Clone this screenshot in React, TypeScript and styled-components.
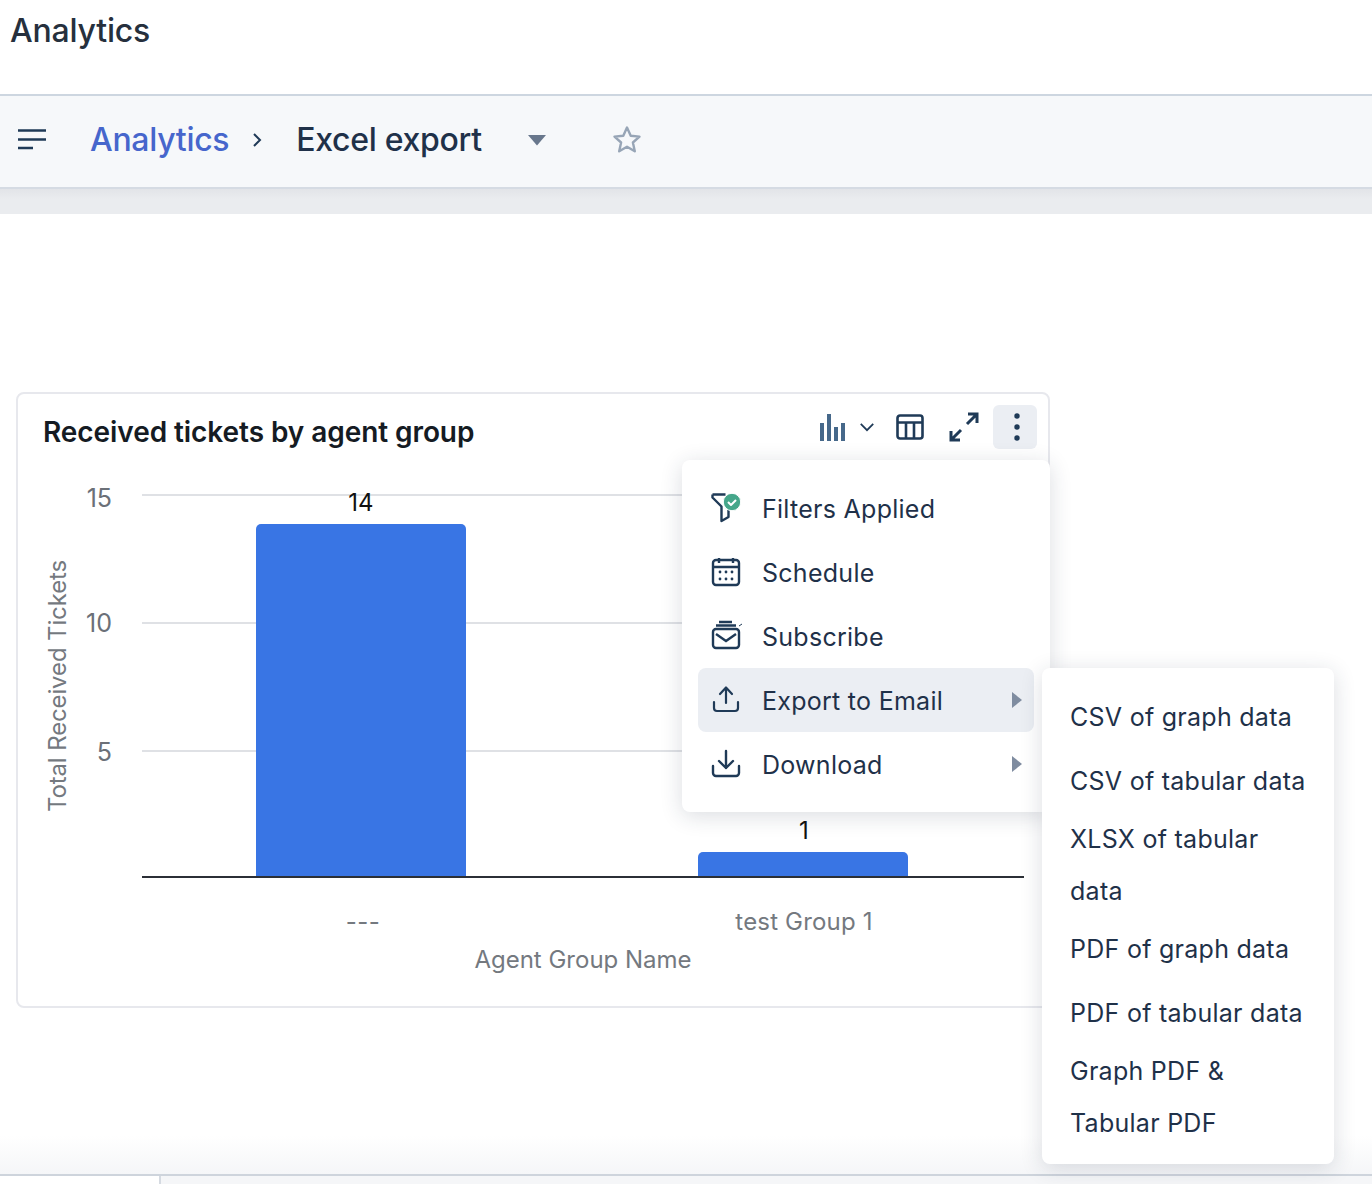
import React from "react";
import styled, { createGlobalStyle } from "styled-components";

const Global = createGlobalStyle`
  html, body { margin: 0; padding: 0; background: #fff; }
  body { font-family: Inter, "Noto Sans", "Liberation Sans", sans-serif; color: #1f3149; }
  * { box-sizing: border-box; }
`;

const Page = styled.div`
  width: 1372px; height: 1184px; overflow: hidden; display: flex; flex-direction: column; background: #fff;
`;
const TitleBar = styled.header`
  height: 94px; padding: 12px 0 0 10px; flex: none;
`;
const PageTitle = styled.h1`
  margin: 0; font-size: 32px; line-height: 38px; font-weight: 500; color: #26303d; letter-spacing: -0.2px;
`;
const Toolbar = styled.nav`
  height: 95px; flex: none; display: flex; align-items: center; background: #f6f8fa;
  border-top: 2px solid #cdd6e0; border-bottom: 2px solid #d5dbe3; padding: 0 0 3px 18px; color: #1f3149;
`;
const Crumb = styled.a`
  margin-left: 44px; font-size: 32px; font-weight: 500; color: #4666cc; letter-spacing: -0.3px; line-height: 40px;
`;
const Current = styled.span`
  margin-left: 34px; font-size: 32px; font-weight: 500; color: #1f3149; letter-spacing: -0.3px; line-height: 40px;
`;
const CrumbSep = styled.svg`margin-left: 23px;`;
const Caret = styled.svg`margin-left: 45px;`;
const Star = styled.svg`margin-left: 65px;`;
const Band = styled.div`
  height: 25px; flex: none; background: linear-gradient(#e2e4e8, #eaecef 40%);
`;
const Content = styled.main`
  flex: 1; padding: 178px 0 0 16px; background: linear-gradient(#fff 0, #fff 96%, #f5f6f8 100%);
`;
const Card = styled.section`
  position: relative; width: 1034px; height: 616px; border: 2px solid #e7e8ed; border-radius: 8px; background: #fff;
`;
const CardHead = styled.div`
  height: 76px; display: flex; align-items: flex-start; padding: 11px 11px 0 25px;
`;
const CardTitle = styled.h2`
  margin: 0; flex: 1; padding-top: 9px; font-size: 28px; line-height: 36px; font-weight: 600; color: #151b23; letter-spacing: -0.07px;
`;
const Actions = styled.div`
  display: flex; align-items: center; height: 44px;
`;
const ChartIcon = styled.svg`display: block; margin-right: 12px;`;
const Chevron = styled.svg`display: block; margin-right: 21px;`;
const TableIcon = styled.svg`display: block; margin-right: 25px;`;
const ExpandIcon = styled.svg`display: block; margin-right: 14px;`;
const MoreButton = styled.button`
  width: 44px; height: 44px; border: 0; padding: 0 0 0 4px; border-radius: 6px; background: #ebeef3;
  display: flex; align-items: center; justify-content: center;
`;
const ChartSvg = styled.svg`
  display: block; position: absolute; left: -1px; top: 75px;
`;
const Menu = styled.ul`
  position: absolute; left: 664px; top: 66px; width: 368px; height: 352px; margin: 0; padding: 16px;
  list-style: none; background: #fff; border-radius: 8px;
  box-shadow: 0 4px 22px rgba(30, 45, 70, 0.16);
`;
const Item = styled.li<{ $active?: boolean }>`
  height: 64px; display: flex; align-items: center; padding: 0 12px 0 12px; border-radius: 8px;
  background: ${(p) => (p.$active ? "#ebeef3" : "transparent")};
  font-size: 25px; letter-spacing: 0.27px; color: #1f3149;
`;
const ItemIcon = styled.svg`flex: none; margin-right: 20px; display: block;`;
const ItemText = styled.span`flex: 1; padding-top: 2px;`;
const Arrow = styled.svg`flex: none; display: block;`;
const SubMenu = styled.ul`
  position: absolute; left: 1024px; top: 274px; width: 292px; height: 496px; margin: 0; padding: 23px 26px 0 28px;
  list-style: none; background: #fff; border-radius: 8px;
  box-shadow: 0 4px 22px rgba(30, 45, 70, 0.16);
`;
const SubItem = styled.li<{ $gap: number }>`
  font-size: 25px; line-height: 52px; letter-spacing: 0.27px; color: #1f3149; margin-bottom: ${(p) => p.$gap}px;
`;
const Footer = styled.footer`
  height: 10px; flex: none; display: flex; border-top: 2px solid #ced4dc; background: #f5f6f8;
`;
const FooterLeft = styled.div`
  width: 161px; background: #fff; border-right: 2px solid #d5dae1;
`;

const navy = "#1f3a57";

export default function App() {
  return (
    <Page>
      <Global />
      <TitleBar><PageTitle>Analytics</PageTitle></TitleBar>
      <Toolbar>
        <svg width="28" height="22" viewBox="0 0 28 22" fill="none" stroke={navy} strokeWidth="2.4">
          <path d="M0 1.5h28M0 10.5h28M0 19h15" />
        </svg>
        <Crumb>Analytics</Crumb>
        <CrumbSep width="10" height="16" viewBox="0 0 10 16" fill="none" stroke={navy} strokeWidth="2">
          <path d="M2 2l6 6-6 6" />
        </CrumbSep>
        <Current>Excel export</Current>
        <Caret width="20" height="11" viewBox="0 0 20 11"><path d="M1 0h18l-9 10.5z" fill="#68778c" /></Caret>
        <Star width="30" height="30" viewBox="0 0 30 30" fill="none" stroke="#97a5b6" strokeWidth="2.4" strokeLinejoin="round">
          <path d="M15 2.5l3.7 8.2 8.8.9-6.6 5.9 1.9 8.8-7.8-4.6-7.8 4.6 1.9-8.8-6.6-5.9 8.8-.9z" />
        </Star>
      </Toolbar>
      <Band />
      <Content>
        <Card>
          <CardHead>
            <CardTitle>Received tickets by agent group</CardTitle>
            <Actions>
              <ChartIcon width="28" height="28" viewBox="0 0 28 28" fill="#46688a">
                <rect x="1" y="10" width="4" height="18" /><rect x="8" y="1" width="4" height="27" /><rect x="15" y="14" width="4" height="14" /><rect x="22" y="10" width="4" height="18" />
              </ChartIcon>
              <Chevron width="16" height="11" viewBox="0 0 18 12" fill="none" stroke={navy} strokeWidth="2">
                <path d="M2 2l7 7 7-7" />
              </Chevron>
              <TableIcon width="28" height="26" viewBox="0 0 28 26" fill="none" stroke={navy} strokeWidth="2.6">
                <rect x="1.5" y="1.5" width="25" height="23" rx="2.5" /><path d="M1.5 8.5h25M10 8.5v16M18 8.5v16" />
              </TableIcon>
              <ExpandIcon width="30" height="30" viewBox="0 0 30 30" fill="none" stroke={navy} strokeWidth="3">
                <path d="M18 12L28 2M19 2h9v9M12 18L2 28M2 19v9h9" />
              </ExpandIcon>
              <MoreButton aria-label="More">
                <svg width="6" height="28" viewBox="0 0 6 28" fill={navy}>
                  <circle cx="3" cy="3" r="2.7" /><circle cx="3" cy="14" r="2.7" /><circle cx="3" cy="25" r="2.7" />
                </svg>
              </MoreButton>
            </Actions>
          </CardHead>
          <ChartSvg width="1033" height="530" viewBox="0 0 1033 530" fontFamily="Inter, sans-serif">
            <g stroke="#dfe1e5" strokeWidth="2">
              <path d="M125 26h882M125 154h882M125 282h882" />
            </g>
            <path d="M239 60a5 5 0 0 1 5-5h200a5 5 0 0 1 5 5v349H239z" fill="#3975e4" />
            <path d="M681 388a5 5 0 0 1 5-5h200a5 5 0 0 1 5 5v21H681z" fill="#3975e4" />
            <path d="M125 408h882" stroke="#2b2f36" strokeWidth="2" />
            <g fill="#6b7078" fontSize="25" textAnchor="end">
              <text x="95" y="38">15</text>
              <text x="95" y="163">10</text>
              <text x="95" y="292">5</text>
            </g>
            <g fill="#111" fontSize="24" textAnchor="middle">
              <text x="344" y="42">14</text>
              <text x="787" y="370">1</text>
            </g>
            <g fill="#74797f" fontSize="24" textAnchor="middle">
              <text x="346" y="461" letterSpacing="0.5">---</text>
              <text x="787" y="461" letterSpacing="0.17">test Group 1</text>
              <text x="566" y="499" letterSpacing="0">Agent Group Name</text>
            </g>
            <text transform="translate(49 217) rotate(-90)" fill="#74797f" fontSize="24" textAnchor="middle" letterSpacing="-0.13">Total Received Tickets</text>
          </ChartSvg>
          <Menu>
            <Item>
              <ItemIcon width="32" height="32" viewBox="0 0 32 32" fill="none" stroke={navy} strokeWidth="2.4" strokeLinejoin="round">
                <path d="M2.5 2.5h13M2.5 2.5v3l9 9v14.5l7-4v-7" />
                <circle cx="22" cy="10" r="8.7" fill="#45a68a" stroke="#fff" strokeWidth="1" />
                <path d="M18 10l3 3 5-5" stroke="#fff" strokeWidth="2" />
              </ItemIcon>
              <ItemText>Filters Applied</ItemText>
            </Item>
            <Item>
              <ItemIcon width="32" height="32" viewBox="0 0 32 32" fill="none" stroke={navy} strokeWidth="2.4">
                <rect x="3" y="4" width="26" height="25" rx="3" />
                <path d="M3 11h26M9 2v5M23 2v5" />
                <g stroke="none" fill={navy}>
                  <circle cx="10" cy="16" r="1.4" /><circle cx="16" cy="16" r="1.4" /><circle cx="22" cy="16" r="1.4" />
                  <circle cx="10" cy="23" r="1.4" /><circle cx="16" cy="23" r="1.4" /><circle cx="22" cy="23" r="1.4" />
                </g>
              </ItemIcon>
              <ItemText>Schedule</ItemText>
            </Item>
            <Item>
              <ItemIcon width="32" height="32" viewBox="0 0 32 32" fill="none" stroke={navy} strokeWidth="2.4">
                <rect x="3" y="9" width="26" height="19" rx="3" />
                <path d="M9 2h13M6 5.5h20M6 14l10 7 10-7" />
                <path d="M29 6l3-2" strokeWidth="1" />
              </ItemIcon>
              <ItemText>Subscribe</ItemText>
            </Item>
            <Item $active>
              <ItemIcon width="32" height="32" viewBox="0 0 32 32" fill="none" stroke={navy} strokeWidth="2.2" strokeLinecap="round" strokeLinejoin="round">
                <path d="M16 19V4M10 10l6-6.5 6 6.5M4 18v6a3 3 0 0 0 3 3h18a3 3 0 0 0 3-3v-6" />
              </ItemIcon>
              <ItemText>Export to Email</ItemText>
              <Arrow width="10" height="16" viewBox="0 0 10 16"><path d="M0 0l10 8-10 8z" fill="#7f8ca0" /></Arrow>
            </Item>
            <Item>
              <ItemIcon width="32" height="32" viewBox="0 0 32 32" fill="none" stroke={navy} strokeWidth="2.4" strokeLinecap="round" strokeLinejoin="round">
                <path d="M16 3v17M9 13l7 7 7-7M3 18v7a3 3 0 0 0 3 3h20a3 3 0 0 0 3-3v-7" />
              </ItemIcon>
              <ItemText>Download</ItemText>
              <Arrow width="10" height="16" viewBox="0 0 10 16"><path d="M0 0l10 8-10 8z" fill="#7f8ca0" /></Arrow>
            </Item>
          </Menu>
          <SubMenu>
            <SubItem $gap={12}>CSV of graph data</SubItem>
            <SubItem $gap={6}>CSV of tabular data</SubItem>
            <SubItem $gap={6}>XLSX of tabular data</SubItem>
            <SubItem $gap={12}>PDF of graph data</SubItem>
            <SubItem $gap={6}>PDF of tabular data</SubItem>
            <SubItem $gap={0}>Graph PDF &amp; Tabular PDF</SubItem>
          </SubMenu>
        </Card>
      </Content>
      <Footer><FooterLeft /></Footer>
    </Page>
  );
}
